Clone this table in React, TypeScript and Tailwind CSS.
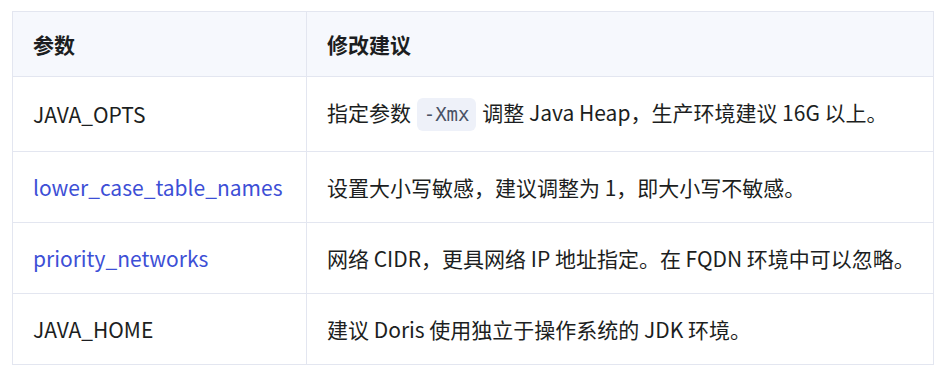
import React from "react";

const rows: { k: string; link?: boolean; v: React.ReactNode }[] = [
  {
    k: "JAVA_OPTS",
    v: (
      <>
        指定参数{" "}
        <code className="mx-[1px] inline-block rounded-md bg-[#eef1f9] px-[7px] py-[4px] align-middle font-['DejaVu_Sans_Mono',monospace] text-[19px] leading-[25px] text-[#4a5266]">
          -Xmx
        </code>{" "}
        调整 Java Heap，生产环境建议 16G 以上。
      </>
    ),
  },
  { k: "lower_case_table_names", link: true, v: "设置大小写敏感，建议调整为 1，即大小写不敏感。" },
  { k: "priority_networks", link: true, v: "网络 CIDR，更具网络 IP 地址指定。在 FQDN 环境中可以忽略。" },
  { k: "JAVA_HOME", v: "建议 Doris 使用独立于操作系统的 JDK 环境。" },
];

export default function App() {
  return (
    <div className="min-h-[381px] w-[944px] bg-white pl-[12px] pt-[11px] font-['Noto_Sans_CJK_SC','Noto_Sans',sans-serif] text-[21px] text-[#1c1e21]">
      <table className="w-[922px] table-fixed border-collapse">
        <thead>
          <tr className="bg-[#f6f8fd]">
            <th className="h-[65px] w-[294px] border border-[#e3e6f0] px-[20px] text-left font-bold leading-[30px]">参数</th>
            <th className="h-[65px] border border-[#e3e6f0] px-[20px] text-left font-bold leading-[30px]">修改建议</th>
          </tr>
        </thead>
        <tbody>
          {rows.map((r, i) => (
            <tr key={r.k}>
              <td
                className={
                  (i === 0 ? "h-[75px] " : "h-[71px] ") +
                  "border border-[#e3e6f0] px-[20px] leading-[30px] " +
                  (r.link ? "text-[#3d4fd6]" : "")
                }
              >
                {r.k}
              </td>
              <td className="whitespace-nowrap border border-[#e3e6f0] px-[20px] leading-[30px]">{r.v}</td>
            </tr>
          ))}
        </tbody>
      </table>
    </div>
  );
}
